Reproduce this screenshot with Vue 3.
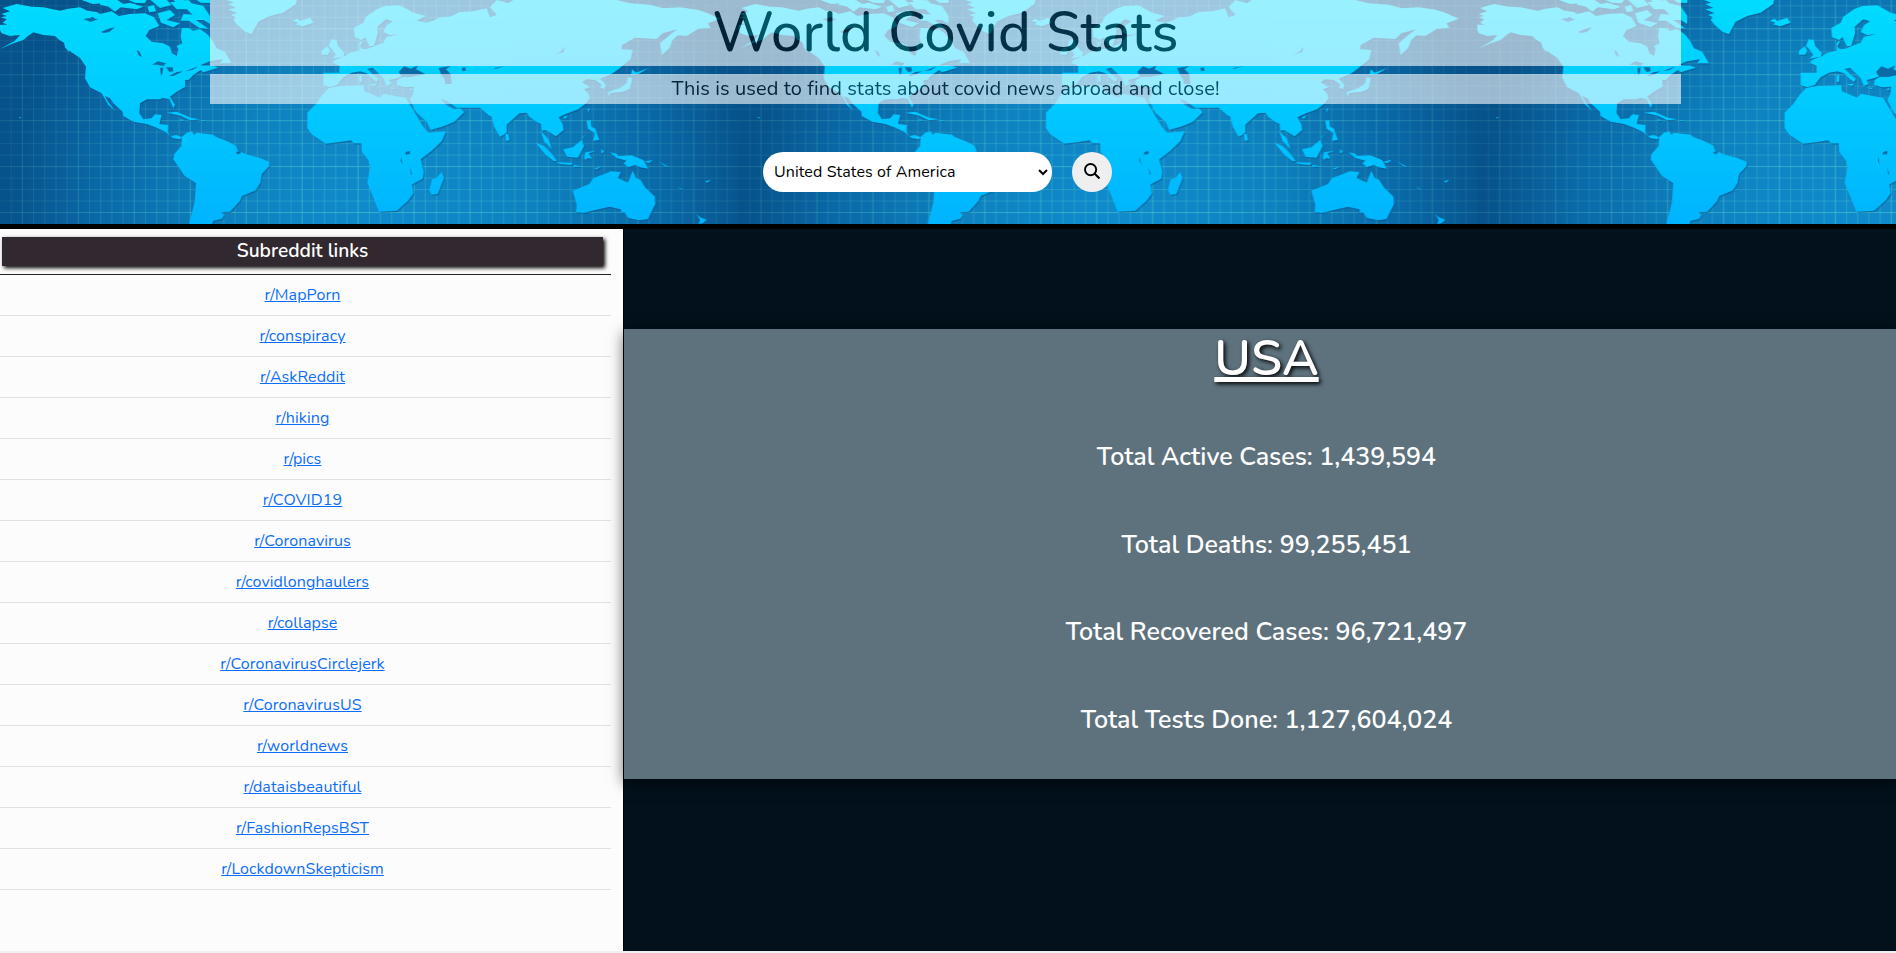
<script setup>
const links = ['MapPorn', 'conspiracy', 'AskReddit', 'hiking', 'pics', 'COVID19', 'Coronavirus', 'covidlonghaulers', 'collapse', 'CoronavirusCirclejerk', 'CoronavirusUS', 'worldnews', 'dataisbeautiful', 'FashionRepsBST', 'LockdownSkepticism']
const stats = [
  { label: 'Total Active Cases', value: '1,439,594' },
  { label: 'Total Deaths', value: '99,255,451' },
  { label: 'Total Recovered Cases', value: '96,721,497' },
  { label: 'Total Tests Done', value: '1,127,604,024' },
]
const vLines = Array.from({ length: 65 }, (_, i) => ({ p: 33.57 * (i + 1), o: i % 5 === 1 ? 0.55 : 0.32 }))
const hLines = Array.from({ length: 19 }, (_, i) => ({ p: 17.5 + 34.45 * i, o: i % 4 === 2 ? 0.55 : 0.32 }))

const land = [
  // North America
  'M0,74L22,74L8,68L20,58L4,52L20,48L4,42L30,34L8,24L50,12L95,20L130,22L180,32L205,26L240,22L262,32L290,36L300,42L335,34L356,48L390,42L435,40L462,52L478,78L448,90L437,108L455,125L490,130L510,140L516,160L530,168L535,148L530,138L547,130L542,110L545,84L565,84L580,92L600,87L616,98L625,106L640,125L650,145L675,155L682,168L695,190L660,190L668,178L630,184L600,196L640,197L655,203L610,217L602,210L580,225L565,240L555,240L556,260L530,275L510,290L525,315L520,324L508,298L490,294L478,298L440,298L420,310L418,340L430,358L455,355L465,343L485,345L478,372L505,375L505,398L512,408L530,405L545,412L540,418L520,415L495,395L470,383L440,372L400,365L370,348L368,335L340,310L330,295L315,288L322,302L345,333L325,315L305,280L270,262L255,235L258,200L240,174L205,150L198,132L175,118L165,108L130,105L100,97L84,108L70,120L40,130L0,147L45,122L60,105L30,108L5,100L0,90Z',
  'M240,165L262,180L268,194L248,181ZM190,122L202,135L208,157L196,143Z',
  // Arctic islands
  'M245,0L302,0L312,10L278,12ZM304,0L352,0L370,12L390,8L430,20L410,28L362,22L345,35L326,20L300,14ZM385,0L440,0L434,10L405,8ZM442,20L462,15L468,34L448,37ZM452,0L500,0L515,15L480,24ZM473,40L510,30L525,45L500,60L540,70L520,82L483,68ZM510,6L565,0L575,10L610,18L630,48L630,72L610,60L588,60L625,86L598,84L566,62L542,62L550,42L578,44L560,28L530,28Z',
  'M590,0L630,0L630,9L602,8ZM520,0L552,0L548,8L530,10Z',
  // Greenland and Iceland
  'M680,0L890,0L888,12L865,28L850,38L810,48L775,65L755,103L735,95L712,75L700,60L706,52L692,44L712,40L684,28L708,24L684,12L702,8ZM878,62L892,56L900,63L930,53L940,68L908,79L887,73L895,68Z',
  // Caribbean
  'M500,338L530,335L572,353L600,358L570,361L542,347L515,341ZM540,358L553,360L542,363ZM606,360L614,360L614,362L606,362ZM58,351L62,351L62,355L58,355Z',
  // South America
  'M545,412L560,398L576,394L582,404L590,398L640,404L648,411L685,425L708,437L714,452L745,465L778,473L808,486L808,498L785,522L781,548L767,571L726,588L720,602L690,635L664,636L672,645L666,656L640,662L636,672L567,672L584,606L588,550L554,528L520,478L523,462L544,438Z',
  // Eurasia
  'M970,218L970,255L990,262L1012,255L1030,232L1055,218L1080,214L1100,220L1118,238L1130,246L1136,236L1120,224L1102,207L1118,203L1135,220L1150,235L1160,258L1174,252L1168,240L1190,235L1215,225L1240,230L1205,232L1192,240L1190,255L1215,262L1242,260L1240,280L1230,300L1250,338L1280,365L1292,390L1330,379L1363,365L1392,337L1380,325L1362,328L1340,316L1322,296L1340,304L1370,323L1440,323L1465,345L1475,350L1483,382L1500,410L1520,398L1520,374L1558,340L1580,338L1588,350L1608,365L1623,372L1625,396L1646,418L1656,448L1632,424L1622,392L1636,390L1668,409L1691,390L1688,372L1676,352L1696,342L1735,328L1758,310L1770,295L1766,282L1752,268L1770,262L1746,247L1760,238L1785,240L1806,254L1800,262L1812,268L1818,255L1800,236L1835,222L1855,208L1892,178L1898,150L1865,148L1866,136L1905,113L1970,117L1988,100L2032,88L2010,104L1980,130L1986,165L2008,145L2018,120L2034,106L2060,108L2095,86L2132,84L2124,70L2160,56L2120,38L2092,29L2040,22L1990,25L1950,14L1890,10L1850,0L1540,0L1525,10L1490,0L1470,22L1490,45L1470,52L1460,25L1420,34L1380,36L1350,50L1320,52L1300,62L1280,68L1250,62L1278,48L1240,38L1200,16L1155,18L1130,28L1098,50L1090,68L1062,84L1064,112L1085,120L1096,112L1108,138L1122,138L1128,118L1134,98L1132,80L1158,58L1178,64L1160,76L1150,96L1168,105L1198,103L1160,110L1150,128L1132,135L1104,146L1088,148L1080,140L1090,120L1078,128L1078,152L1050,158L1035,168L1004,180L998,188L1018,198L1018,218Z',
  // British Isles
  'M994,118L1010,120L1014,138L1034,160L1030,170L996,176L1008,165L998,150L986,138ZM965,152L982,139L990,152L984,164L965,164Z',
  // Mediterranean islands
  'M1078,226L1086,225L1086,245L1078,246ZM1106,253L1128,251L1126,258ZM1166,263L1186,263L1184,267ZM1226,268L1238,264L1234,271Z',
  // Africa
  'M986,264L1020,258L1092,256L1094,274L1140,293L1150,281L1218,294L1248,344L1272,383L1286,398L1338,394L1325,424L1295,452L1262,478L1271,515L1268,536L1236,553L1240,580L1224,602L1190,632L1137,635L1117,585L1102,548L1111,502L1106,482L1086,456L1084,430L1061,430L1053,421L1018,426L977,431L936,404L922,384L922,338L948,312L966,286Z',
  'M1325,516L1332,534L1313,582L1295,584L1288,570L1296,538L1310,534ZM1516,402L1524,402L1529,420L1518,423Z',
  // Asian archipelagos
  'M1896,208L1908,218L1946,204L1916,222L1893,224ZM1884,232L1897,234L1890,266L1870,275L1832,279L1826,290L1824,276L1860,264L1880,250ZM1763,326L1769,324L1765,339ZM1689,352L1702,346L1697,357ZM1760,362L1772,360L1774,380L1786,386L1798,420L1780,422L1784,400L1764,386ZM1744,416L1758,400L1750,412Z',
  'M1607,428L1632,438L1656,462L1671,482L1662,484L1638,466ZM1668,487L1718,488L1714,495L1680,492ZM1720,494L1750,500L1722,500ZM1690,448L1718,442L1745,420L1752,438L1734,473L1701,470ZM1756,457L1788,452L1766,460L1776,476L1762,474L1758,480L1752,474ZM1804,446L1812,456L1804,460ZM1830,457L1850,461L1855,468L1894,466L1930,480L1945,506L1920,502L1905,495L1884,502L1871,490L1880,482L1850,474ZM1932,486L1958,479L1948,489ZM1782,506L1805,498L1790,508Z',
  // Oceania
  'M1718,572L1768,552L1780,534L1814,522L1832,514L1862,516L1854,534L1884,548L1898,512L1908,534L1922,540L1935,562L1965,590L1966,612L1944,657L1918,661L1885,654L1872,636L1866,640L1862,628L1828,620L1776,632L1750,639L1728,636L1730,614Z',
  'M2089,641L2100,652L2120,659L2108,670L2096,672L2100,660ZM2116,544L2132,539L2122,548ZM2032,558L2048,569L2042,568ZM1974,484L2006,500L1998,500Z',
].join('')

const water = 'M250,57L270,54L278,50L285,56L295,57L272,66ZM302,96L325,86L345,82L328,96L312,99ZM410,151L418,154L426,172L416,166ZM456,194L474,184L498,190L490,198L472,194ZM480,204L490,202L488,218L483,228ZM498,202L518,202L520,214L508,216ZM507,228L530,216L550,214L520,228ZM556,214L594,199L578,210ZM1196,216L1212,199L1232,206L1254,196L1248,208L1276,222L1236,230L1204,228ZM1316,204L1352,198L1338,208L1352,222L1355,252L1336,252L1334,238L1324,226ZM1385,204L1396,202L1398,212L1388,214ZM1480,205L1516,198L1488,206ZM1662,164L1682,155L1695,140L1690,156ZM1217,456L1230,452L1230,462L1216,464ZM1203,470L1206,486L1210,494L1202,484ZM1231,502L1236,525L1232,522ZM708,456L720,453L723,460L711,463Z'
</script>

<template>
  <div class="page">
    <header class="hero">
      <svg class="map" width="1896" height="224" viewBox="0 0 5688 672">
        <defs>
          <radialGradient id="sea" gradientUnits="userSpaceOnUse" cx="1140" cy="640" r="1120">
            <stop offset="0" stop-color="#0f8bcc" /><stop offset=".4" stop-color="#0e82c0" /><stop offset=".75" stop-color="#0a69a8" /><stop offset="1" stop-color="#07528a" />
          </radialGradient>
          <radialGradient id="grid" gradientUnits="userSpaceOnUse" cx="1140" cy="640" r="1150">
            <stop offset="0" stop-color="#55d0d0" /><stop offset=".5" stop-color="#4cc9cd" stop-opacity=".85" /><stop offset="1" stop-color="#4cb9b4" stop-opacity=".4" />
          </radialGradient>
          <linearGradient id="ground" gradientUnits="userSpaceOnUse" x1="0" y1="0" x2="0" y2="672">
            <stop offset="0" stop-color="#00dcff" /><stop offset="1" stop-color="#00b4ff" />
          </linearGradient>
          <pattern id="world" patternUnits="userSpaceOnUse" width="2216" height="672">
            <rect width="2216" height="672" fill="url(#sea)" />
            <g fill="url(#grid)">
              <rect v-for="l in vLines" :key="'v' + l.p" :x="l.p - 1.5" y="0" width="3" height="672" :fill-opacity="l.o" />
              <rect v-for="l in hLines" :key="'h' + l.p" x="0" :y="l.p - 1.5" width="2216" height="3" :fill-opacity="l.o" />
            </g>
            <path :d="land" transform="translate(3 4)" fill="#07548a" fill-opacity=".5" />
            <path :d="land" fill="url(#ground)" />
            <path :d="water" fill="#0b6ba7" />
          </pattern>
        </defs>
        <rect width="5688" height="672" fill="url(#world)" />
      </svg>
      <div class="intro">
        <h1><span>World Covid Stats</span></h1>
        <p><span>This is used to find stats about covid news abroad and close!</span></p>
      </div>
      <form class="search" @submit.prevent>
        <div class="select"><span>United States of America</span>
          <svg width="10" height="7" viewBox="0 0 10 7"><path d="M1 1l4 4 4-4" fill="none" stroke="#000" stroke-width="2" /></svg>
        </div>
        <button aria-label="Search">
          <svg width="16" height="16" viewBox="0 0 16 16" fill="none" stroke="#000"><circle cx="6.6" cy="6.6" r="5.6" stroke-width="1.9" /><path d="M10.5 10.5l5 5" stroke-width="2.1" /></svg>
        </button>
      </form>
    </header>
    <main>
      <aside>
        <div class="heading"><h2><span>Subreddit links</span></h2></div>
        <ul><li v-for="l in links" :key="l"><a href="#">r/{{ l }}</a></li></ul>
      </aside>
      <section class="content">
        <article>
          <h2><span>USA</span></h2>
          <p v-for="s in stats" :key="s.label"><span>{{ s.label }}: {{ s.value }}</span></p>
        </article>
      </section>
    </main>
  </div>
</template>

<style>
body { margin: 0; background: #f0f0f0; overflow: hidden; }
</style>
<style scoped>
* { box-sizing: border-box; }
.page { height: 953px; font-family: Nunito, "Open Sans", sans-serif; font-size: 16px; line-height: 24px; font-weight: 450; letter-spacing: .1px; }
h1, h2, p, ul { margin: 0; padding: 0; }
.hero { position: relative; height: 229px; border-bottom: 5px solid #000; }
.map { position: absolute; inset: 0; display: block; }
.intro { position: relative; width: 1471px; margin-left: 210px; display: grid; gap: 8px; text-align: center; color: #000; }
.intro h1 { height: 66px; background: #fff; opacity: .6; font-size: 56px; line-height: 66px; font-weight: 500; letter-spacing: .25px; white-space: nowrap; }
.intro p { height: 30px; background: #fff; opacity: .6; font-size: 20px; line-height: 29px; }
.search { position: relative; display: flex; gap: 20px; margin: 48px 0 0 763px; }
.select { width: 289px; height: 40px; border-radius: 20px; background: #fff; color: #000; display: flex; align-items: center; justify-content: space-between; padding: 0 4px 0 11px; }
.search button { width: 40px; height: 40px; border: 0; border-radius: 50%; background: #efefef; padding: 0 0 2px 0; display: grid; place-items: center; }
main { display: flex; height: 722px; }
aside { width: 624px; background: #fcfcfc; border-right: 1px solid #000; padding-right: 12px; text-align: center; }
.heading { height: 46px; border-bottom: 1px solid #212529; padding: 8px 8px 0 2px; }
.heading h2 { height: 29px; background: #31292f; color: #fff; font-size: 19.2px; line-height: 28px; font-weight: 600; letter-spacing: 0; box-shadow: 2px 2px 4px #000; }
ul { list-style: none; }
li { height: 41px; border-bottom: 1px solid #dee2e6; line-height: 40px; padding-right: 6px; }
a { color: #0d6efd; }
.content { flex: 1; background: #02111b; padding-top: 100px; }
article { height: 450px; background: #5e727d; color: #fff; text-align: center; letter-spacing: 0; padding-left: 13px; box-shadow: 0 4px 14px rgba(0, 0, 0, .6); }
article h2 { font-size: 50px; line-height: 60px; height: 84px; font-weight: 600; text-decoration: underline; text-decoration-thickness: 5px; text-underline-offset: 2px; text-decoration-skip-ink: none; text-shadow: 2px 2px 4px #000; }
article p { height: 87.7px; line-height: 88px; font-size: 25px; font-weight: 600; }
</style>
